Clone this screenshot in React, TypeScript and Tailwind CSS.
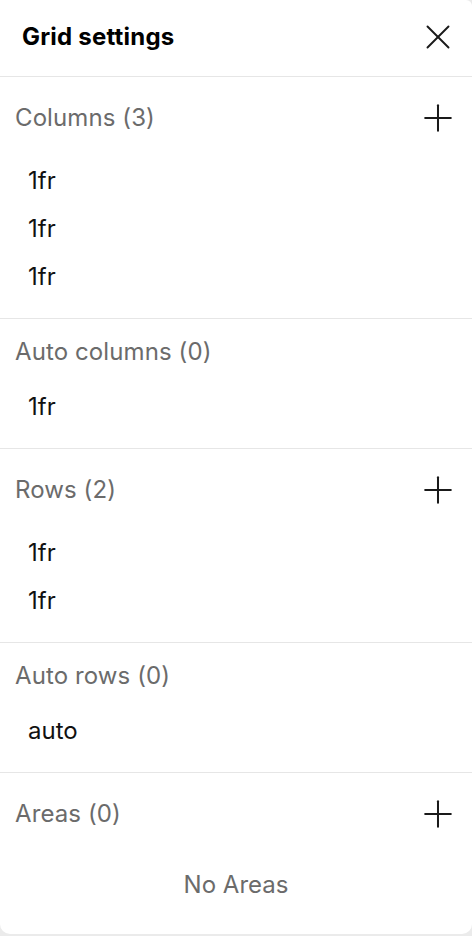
import { X, Plus } from 'lucide-react';

// Panneau de réglages de grille : colonnes, lignes et zones.

type Section = {
  title: string;
  items: string[];
  addable: boolean;
  empty?: string;
};

const sections: Section[] = [
  { title: 'Columns (3)', items: ['1fr', '1fr', '1fr'], addable: true },
  { title: 'Auto columns (0)', items: ['1fr'], addable: false },
  { title: 'Rows (2)', items: ['1fr', '1fr'], addable: true },
  { title: 'Auto rows (0)', items: ['auto'], addable: false },
  { title: 'Areas (0)', items: [], addable: true, empty: 'No Areas' },
];

function GridSection({ title, items, addable, empty }: Section) {
  return (
    <div className="pt-[19px] pb-[17px] border-b border-[#e6e6e6] last:border-b-0">
      <div className="flex items-center justify-between pl-[15px] pr-[12px]">
        <span className="text-[24px] leading-[28px] tracking-[0.1px] text-[#6b6b6b]">{title}</span>
        {addable && (
          <button className="w-[44px] h-[44px] flex items-center justify-center text-[#1a1a1a]">
            <Plus size={44} strokeWidth={1.1} />
          </button>
        )}
      </div>
      <div className="mt-[17px]">
        {items.map((v, i) => (
          <div key={i} className="h-12 flex items-center pl-[28px] text-[24px] text-[#111111]">
            {v}
          </div>
        ))}
        {empty && (
          <div className="h-16 flex items-center justify-center text-[24px] text-[#6b6b6b]">{empty}</div>
        )}
      </div>
    </div>
  );
}

export default function App() {
  return (
    <div className="w-[472px] h-[936px] bg-[#ebebeb]" style={{ fontFamily: 'Inter, "Noto Sans", sans-serif' }}>
      <div className="bg-white rounded-b-[10px] rounded-tr-[6px] overflow-hidden">
        <div className="h-[77px] pb-[3px] flex items-center justify-between pl-[22px] pr-[12px] border-b border-[#e6e6e6]">
          <h1 className="text-[24px] font-bold tracking-[0.2px] text-black">Grid settings</h1>
          <button className="w-[44px] h-[44px] flex items-center justify-center text-[#1a1a1a]">
            <X size={42} strokeWidth={1.1} />
          </button>
        </div>
        {sections.map(s => (
          <GridSection key={s.title} {...s} />
        ))}
      </div>
    </div>
  );
}
